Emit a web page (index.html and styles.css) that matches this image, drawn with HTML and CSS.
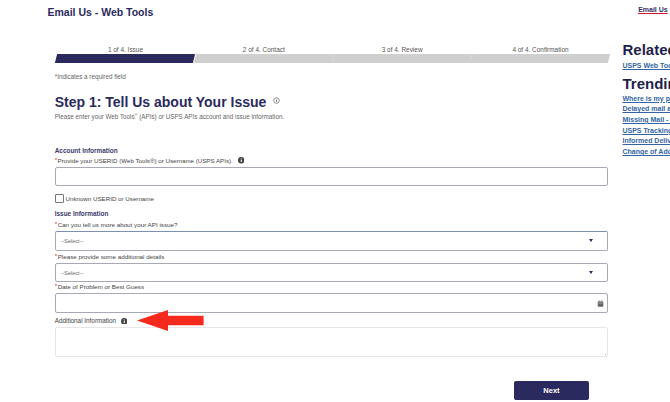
FILE: index.html
```html
<!DOCTYPE html>
<html lang="en">
<head>
    <meta charset="utf-8">
    <title>Email Us - Web Tools</title>
    <link rel="stylesheet" href="styles.css">
</head>
<body>
<div class="page">
    <header class="topbar">
        <h2 class="pagetitle">Email Us - Web Tools</h2>
        <a class="toplink" href="#">Email Us</a>
    </header>
    <div class="columns">
        <main class="maincol">
            <div class="steps">
                <div class="step active"><span>1 of 4. Issue</span><i></i></div>
                <div class="step"><span>2 of 4. Contact</span><i></i></div>
                <div class="step"><span>3 of 4. Review</span><i></i></div>
                <div class="step"><span>4 of 4. Confirmation</span><i></i></div>
            </div>
            <p class="reqnote">*Indicates a required field</p>
            <h1 class="stephead">Step 1: Tell Us about Your Issue
                <svg class="smallinfo" viewBox="0 0 10 10"><circle cx="5" cy="5" r="4" fill="none" stroke="#555" stroke-width="0.9"/><rect x="4.5" y="4.3" width="1" height="3" fill="#555"/><rect x="4.5" y="2.6" width="1" height="1" fill="#555"/></svg>
            </h1>
            <p class="intro">Please enter your Web Tools<sup>®</sup> (APIs) or USPS APIs account and issue information.</p>

            <h4 class="section first">Account Information</h4>
            <label class="fieldlabel acct"><b>*</b>Provide your USERID (Web Tools®) or Username (USPS APIs).
                <svg class="info" viewBox="0 0 10 10"><circle cx="5" cy="5" r="5" fill="#444"/><rect x="4.2" y="4.3" width="1.6" height="3.4" fill="#fff"/><rect x="4.2" y="2.2" width="1.6" height="1.4" fill="#fff"/></svg>
            </label>
            <input class="box" type="text">
            <label class="checkrow"><span class="check"></span>Unknown USERID or Username</label>

            <h4 class="section">Issue Information</h4>
            <label class="fieldlabel redstar"><b>*</b>Can you tell us more about your API issue?</label>
            <div class="box selectbox first-select"><span>--Select--</span><em></em></div>
            <label class="fieldlabel"><b>*</b>Please provide some additional details</label>
            <div class="box selectbox"><span>--Select--</span><em></em></div>
            <label class="fieldlabel"><b>*</b>Date of Problem or Best Guess</label>
            <div class="box datebox">
                <svg class="cal" viewBox="0 0 10 10"><rect x="1" y="2" width="8" height="7.5" rx="1" fill="#666"/><rect x="2.5" y="0.6" width="1.2" height="2" fill="#666"/><rect x="6.3" y="0.6" width="1.2" height="2" fill="#666"/><rect x="2" y="4" width="6" height="0.7" fill="#ddd"/></svg>
            </div>
            <label class="fieldlabel addl">Additional Information
                <svg class="info" viewBox="0 0 10 10"><circle cx="5" cy="5" r="5" fill="#444"/><rect x="4.2" y="4.3" width="1.6" height="3.4" fill="#fff"/><rect x="4.2" y="2.2" width="1.6" height="1.4" fill="#fff"/></svg>
            </label>
            <textarea class="notes"></textarea>
            <div class="actions"><button class="nextbtn">Next</button></div>
        </main>
        <aside class="sidecol">
            <h3 class="sidehead">Related</h3>
            <a class="sidelink" href="#">USPS Web Tools</a>
            <h3 class="sidehead trending">Trending</h3>
            <a class="sidelink" href="#">Where is my package?</a>
            <a class="sidelink" href="#">Delayed mail and packages</a>
            <a class="sidelink" href="#">Missing Mail - Search</a>
            <a class="sidelink" href="#">USPS Tracking</a>
            <a class="sidelink" href="#">Informed Delivery</a>
            <a class="sidelink" href="#">Change of Address</a>
        </aside>
    </div>
    <svg class="arrow" viewBox="0 0 67 21"><polygon points="0,10.5 31,0 31,5.7 66.6,5.7 66.6,15.3 31,15.3 31,21" fill="#f52a1c"/></svg>
</div>
</body>
</html>
```

FILE: styles.css
```css
* {
    box-sizing: border-box;
}

html, body {
    margin: 0;
    height: 402px;
    overflow: hidden;
    background-color: #fff;
}

body {
    font-family: "Liberation Sans", Arial, sans-serif;
    color: #444;
}

.page {
    position: relative;
    width: 670px;
    height: 402px;
    overflow: hidden;
}

.topbar {
    display: flex;
    justify-content: space-between;
    height: 43px;
    padding: 6px 2.3px 0 47.5px;
}

.pagetitle {
    margin: 0;
    font-size: 10.5px;
    line-height: 13px;
    color: #2a2a5c;
}

.toplink {
    font-size: 7px;
    line-height: 8px;
    font-weight: bold;
    color: #333366;
    text-decoration: underline;
    text-decoration-color: #d3172e;
    text-decoration-thickness: 1.2px;
}

.columns {
    display: flex;
    align-items: flex-start;
}

.maincol {
    flex: none;
    width: 553.6px;
    margin-left: 54.7px;
}

.sidecol {
    flex: none;
    width: 200px;
    margin-left: 14.2px;
    margin-top: -1.8px;
}

/* progress bar */
.steps {
    display: flex;
    margin-right: -1.4px;
    padding-left: 1.6px;
}

.step {
    flex: 1;
    text-align: center;
    font-size: 6.45px;
    line-height: 10px;
    color: #555;
}

.step span {
    display: block;
    height: 11.3px;
    padding-top: 2px;
}

.step i {
    display: block;
    height: 9px;
    margin-right: 0.7px;
    background-color: #cfcfcf;
    transform: skewX(-14deg);
}

.step.active i {
    background-color: #2b2a5e;
}

.reqnote {
    margin: 9.5px 0 0;
    font-size: 6.3px;
    line-height: 8px;
    color: #666;
}

.stephead {
    margin: 11.2px 0 0;
    font-size: 14px;
    line-height: 20px;
    color: #2a2a5c;
}

.smallinfo {
    width: 7px;
    height: 7px;
    margin-left: 3px;
    vertical-align: 3px;
}

.intro {
    margin: 0;
    font-size: 6.27px;
    line-height: 10px;
    color: #666;
}

.intro sup {
    font-size: 4px;
    line-height: 0;
}

.section {
    margin: 0;
    font-size: 6.45px;
    line-height: 9px;
    color: #3a3a68;
}

.section.first {
    margin-top: 23.8px;
}

.fieldlabel {
    display: block;
    height: 11px;
    font-size: 6.25px;
    line-height: 10px;
    color: #444;
}

.fieldlabel.acct {
    height: 12.2px;
    padding-top: 1px;
    font-size: 6.2px;
}

.fieldlabel b {
    position: relative;
    top: -1px;
    margin-right: 0.5px;
    color: #d3172e;
    font-weight: normal;
}

.info {
    width: 6.5px;
    height: 6.5px;
    margin-left: 3px;
    vertical-align: -1px;
}

.box {
    display: block;
    width: 100%;
    height: 19.5px;
    margin: 0;
    background-color: #fff;
    border: 1px solid #a9a9b5;
    border-radius: 2px;
}

.checkrow {
    display: flex;
    align-items: center;
    height: 9px;
    margin-top: 7.1px;
    font-size: 6.2px;
    color: #444;
}

.check {
    width: 9.3px;
    height: 9px;
    margin-right: 1.5px;
    border: 1px solid #777;
    border-radius: 1px;
}

.checkrow + .section {
    margin-top: 6.5px;
}

.section + .redstar {
    margin-top: 2px;
}

.selectbox {
    display: flex;
    align-items: center;
    justify-content: space-between;
    padding: 0 14px 0 5px;
    font-size: 5.5px;
    color: #666;
}

.first-select {
    margin-bottom: 1.3px;
    border-top-color: #7d8fb5;
}

.selectbox em {
    width: 0;
    height: 0;
    border-left: 2.5px solid transparent;
    border-right: 2.5px solid transparent;
    border-top: 3px solid #2b2a5e;
}

.datebox {
    display: flex;
    align-items: center;
    justify-content: flex-end;
    padding-right: 3px;
}

.cal {
    width: 7px;
    height: 7px;
}

.fieldlabel.addl {
    margin-top: 3.5px;
    font-size: 6.35px;
}

.notes {
    display: block;
    width: 100%;
    height: 29.2px;
    margin: 0;
    border: 1px solid #e6e6e6;
    border-radius: 2px;
    resize: none;
    background: linear-gradient(135deg, transparent 50%, #aaa 50%, #aaa 65%, transparent 65%, transparent 78%, #aaa 78%) no-repeat right 1px bottom 1px / 3px 3px;
}

.actions {
    display: flex;
    justify-content: flex-end;
    margin-top: 24.4px;
    padding-right: 19px;
}

.nextbtn {
    width: 75.6px;
    height: 19.5px;
    border: 0;
    border-radius: 2px;
    background-color: #2b2a5e;
    color: #fff;
    font-family: "Liberation Sans", Arial, sans-serif;
    font-size: 7.5px;
    font-weight: bold;
}

/* sidebar */
.sidehead {
    margin: 0 0 3px;
    font-size: 15px;
    line-height: 17px;
    color: #1f1f4d;
    white-space: nowrap;
}

.sidehead.trending {
    margin-top: 2.8px;
    margin-bottom: 1.85px;
}

.sidelink {
    display: block;
    height: 10.7px;
    font-size: 7px;
    line-height: 10.7px;
    font-weight: bold;
    color: #34649f;
    white-space: nowrap;
}

/* annotation drawn over the form */
.arrow {
    position: absolute;
    left: 136.7px;
    top: 310px;
    width: 67px;
    height: 21px;
}
```
